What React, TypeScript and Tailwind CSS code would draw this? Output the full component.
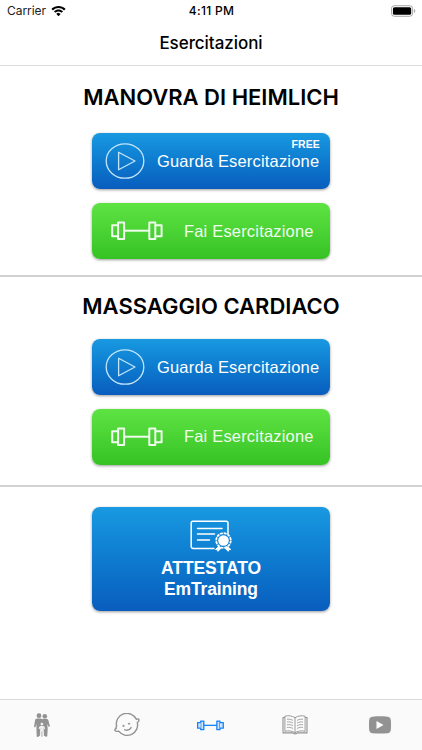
import React from 'react';

interface IconProps {
  className?: string;
}

interface SectionProps {
  title: string;
  titleClass: string;
  free?: boolean;
}

const WifiIcon: React.FC<IconProps> = ({ className }) => (
  <svg viewBox="0 0 16 12" fill="currentColor" className={className}>
    <path d="M8 0.6c2.8 0 5.3 1.1 7.2 2.8.2.2.2.5 0 .7l-1 1c-.2.2-.4.2-.6 0C12.100 3.700 10.100 2.900 8 2.900S3.900 3.700 2.400 5.100c-.2.2-.4.2-.6 0l-1-1c-.2-.2-.2-.5 0-.7C2.700 1.700 5.200.6 8 .6z" />
    <path d="M8 4.300c1.700 0 3.300.7 4.500 1.700.2.2.2.5 0 .7l-1 1c-.2.2-.4.2-.6 0C10.100 7 9.100 6.600 8 6.600s-2.100.4-2.900 1.100c-.2.2-.4.2-.6 0l-1-1c-.2-.2-.2-.5 0-.7C4.700 5 6.300 4.300 8 4.300z" />
    <path d="M8 8c.8 0 1.500.3 2 .8.200.2.200.4 0 .6l-1.700 1.800c-.2.2-.4.2-.6 0L6 9.400c-.2-.2-.2-.4 0-.6.5-.5 1.200-.8 2-.8z" />
  </svg>
);

const BatteryIcon: React.FC<IconProps> = ({ className }) => (
  <svg viewBox="0 0 26 12" className={className}>
    <rect x="0.500" y="0.500" width="22" height="11" rx="3" fill="#fff" stroke="#a3a3a3" />
    <rect x="2" y="2" width="19" height="8" rx="1.700" fill="#000" />
    <path d="M24 4c.8.3 1.200 1.100 1.200 2S24.800 7.700 24 8z" fill="#a3a3a3" />
  </svg>
);

const PlayIcon: React.FC<IconProps> = ({ className }) => (
  <svg viewBox="0 0 40 36" fill="none" stroke="currentColor" strokeWidth="1.300" className={className}>
    <ellipse cx="20" cy="18" rx="18.800" ry="17.200" />
    <path d="M13.600 9.200v17.600L30 18z" strokeLinejoin="round" />
  </svg>
);

const DumbbellIcon: React.FC<IconProps> = ({ className }) => (
  <svg viewBox="0 0 52 20" fill="none" stroke="currentColor" strokeLinejoin="round" className={className}>
    <rect x="7.100" y="1.500" width="6" height="16.500" />
    <path d="M7.100 4.300H1.200v10.900h5.900" />
    <path d="M13.100 9.700h25.200" />
    <rect x="38.300" y="1.500" width="6" height="16.500" />
    <path d="M44.300 4.300h6.300v10.900h-6.300" />
  </svg>
);

const CertificateIcon: React.FC<IconProps> = ({ className }) => (
  <svg viewBox="0 0 42 32" fill="none" stroke="currentColor" strokeLinejoin="round" className={className}>
    <path d="M24.500 28.400H3a1.800 1.800 0 0 1-1.800-1.800V3A1.800 1.800 0 0 1 3 1.200h33.200A1.800 1.800 0 0 1 38 3v11" strokeWidth="1.500" />
    <path d="M7.500 8.500H32M7.500 14h17M7.500 20h12" strokeWidth="1.500" strokeLinecap="round" />
    <path d="M29 26l-3.500 3.500 2 .2.500 1.600 3.500-3.500M37 26l3.800 3.500-2.100.2-.5 1.600-3.500-3.500" fill="currentColor" strokeWidth="1" />
    <circle cx="33.500" cy="20.500" r="7.300" fill="#1787d8" strokeWidth="1.700" strokeDasharray="3 .82" />
    <circle cx="33.500" cy="20.500" r="5.300" fill="currentColor" stroke="none" />
  </svg>
);

const FamilyIcon: React.FC<IconProps> = ({ className }) => (
  <svg viewBox="0 0 16 24" fill="currentColor" className={className}>
    <circle cx="5" cy="2.700" r="2.400" />
    <circle cx="10.800" cy="3.200" r="2.300" />
    <path d="M3 5.400h4l1.100.8 1.200-.5h2.900c1.200 0 2 .8 2.300 2l1.300 5c.3 1.100-1 1.500-1.500.6l-1-2.200.4 4.600-.4 7c-.1 1.400-2 1.400-2.200.2H4.900c-.1 1.400-2.100 1.400-2.200 0l-.3-7.500.1-4.500-.9 2.900c-.5 1-1.700.6-1.500-.5l.9-5.700c.3-1.400.9-2.200 2-2.200z" />
    <circle cx="7.900" cy="11.100" r="1.400" fill="#f1f1f1" />
    <path d="M6.300 13h3.200c.8 0 1.200.8 1.700 3l-.7.300-.8-1.300.4 8h-4.300l.4-8-.8 1.300-.7-.3c.4-2.200.8-3 1.600-3z" fill="#eee" />
    <path d="M7.900 18.500v5.500" stroke="currentColor" strokeWidth=".6" />
  </svg>
);

const BabyIcon: React.FC<IconProps> = ({ className }) => (
  <svg viewBox="0 0 26 24" fill="none" stroke="currentColor" strokeWidth="1.400" strokeLinecap="round" strokeLinejoin="round" className={className}>
    <path d="M2.600 13.200A10.500 10.500 0 0 1 22.300 6.300c1.500-.8 2.800-.4 2.700.9-.1 1.100-.7 1.800-1.700 2.200A10.500 10.500 0 0 1 4.700 18.200c-2.300.4-4-.2-3.900-1.300.1-.8.8-1.200 1.500-1.400-.4-.8-.3-1.700.3-2.300z" />
    <path d="M10.700 16.800c2.500.8 5.300-.2 6.400-2.200" />
    <circle cx="9.400" cy="12.900" r=".7" fill="currentColor" strokeWidth=".7" />
    <circle cx="15" cy="10.700" r=".7" fill="currentColor" strokeWidth=".7" />
  </svg>
);

const BookIcon: React.FC<IconProps> = ({ className }) => (
  <svg viewBox="0 0 26 20" fill="none" stroke="currentColor" strokeLinejoin="round" className={className}>
    <path d="M13 2.800C10.300.8 6.500.3 2.900 1.200v15.100c3.600-.9 7.400-.4 10.100 1.500 2.700-1.900 6.500-2.400 10.100-1.500V1.200C19.500.3 15.700.8 13 2.800v15" strokeWidth=".9" />
    <path d="M2.900 2.500H1v15.400h9.700c.3 1.300 4.300 1.300 4.600 0H25V2.500h-1.900" strokeWidth="1.100" />
    <path d="M5 4.300c2-.3 4.200 0 6 1.100M5 7c2-.3 4.200 0 6 1.100M5 9.700c2-.3 4.200 0 6 1.100M5 12.400c2-.3 4.200 0 6 1.100M21 4.300c-2-.3-4.200 0-6 1.100M21 7c-2-.3-4.200 0-6 1.100M21 9.700c-2-.3-4.200 0-6 1.100M21 12.400c-2-.3-4.200 0-6 1.100" strokeWidth=".8" />
  </svg>
);

const VideoIcon: React.FC<IconProps> = ({ className }) => (
  <svg viewBox="0 0 22 18" fill="currentColor" className={className}>
    <path d="M3.500.8C8.500.2 13.500.2 18.500.8 20.500 1 21.600 2 21.800 4c.3 3.300.3 6.700 0 10-.2 2-1.300 3-3.300 3.200-5 .5-10 .5-15 0C1.500 17 .4 16 .2 14-.1 10.700-.1 7.300.2 4 .4 2 1.500 1 3.500.8z" />
    <path d="M7.500 5v8l7-4z" fill="#fff" />
  </svg>
);

const Section: React.FC<SectionProps> = ({ title, titleClass, free }) => (
  <section className="flex flex-col items-center border-b-2 border-[#d2d2d3]">
    <h2 className={`font-['Inter'] text-[22px] leading-7 font-semibold whitespace-nowrap text-black ${titleClass}`}>{title}</h2>
    <button className="relative flex h-[56px] w-[238px] shrink-0 items-center rounded-lg bg-linear-to-b from-[#1999e1] to-[#0a5dbd] pl-[13px] text-white shadow-[0_1px_3px_rgba(0,0,0,0.4)]">
      <PlayIcon className="h-9 w-10 text-[#c3e5fa]" />
      <span className="ml-3 pt-px text-[16.500px] tracking-[0.18px] whitespace-nowrap">Guarda Esercitazione</span>
      {free && <span className="absolute top-[5px] right-[10px] text-[10.500px] leading-3 font-bold tracking-[0.15px]">FREE</span>}
    </button>
    <button className="mt-3.5 flex h-[56px] w-[238px] shrink-0 items-center rounded-lg bg-linear-to-b from-[#5ee343] to-[#35c323] pl-[19px] text-[#effced] shadow-[0_1px_3px_rgba(0,0,0,0.4)]">
      <DumbbellIcon className="h-5 w-[52px] stroke-2" />
      <span className="ml-[21px] text-[16.500px] tracking-[0.18px] whitespace-nowrap">Fai Esercitazione</span>
    </button>
  </section>
);

const App: React.FC = () => {
  return (
    <div className="flex h-[750px] w-[422px] flex-col overflow-hidden bg-white font-['Liberation_Sans',sans-serif]">
      <header className="h-[66px] shrink-0 border-b border-[#dedede] font-['Inter'] text-black">
        <div className="grid h-[22px] grid-cols-3 items-center pr-[6px] pl-[7px]">
          <div className="flex items-center gap-[5px]">
            <span className="text-[12px] tracking-[-0.050px] text-[#222]">Carrier</span>
            <WifiIcon className="h-3 w-[15px]" />
          </div>
          <span className="text-center text-[12px] font-medium tracking-[0.3px]">4:11 PM</span>
          <BatteryIcon className="h-3 w-[25px] justify-self-end" />
        </div>
        <h1 className="pt-[9px] text-center text-[17px] leading-6 font-medium tracking-[-0.050px]">Esercitazioni</h1>
      </header>

      <main className="flex-1">
        <div className="h-[211px] pt-[17px] [&>section]:h-[194px]">
          <Section title="MANOVRA DI HEIMLICH" titleClass="mb-[22px]" free />
        </div>
        <div className="pt-[15px] [&>section]:h-[195px]">
          <Section title="MASSAGGIO CARDIACO" titleClass="mb-[18.500px]" />
        </div>
        <button className="mx-auto mt-5 flex h-[104px] w-[238px] flex-col items-center rounded-lg bg-linear-to-b from-[#1999e1] to-[#0a5dbd] pt-[13px] text-white shadow-[0_1px_3px_rgba(0,0,0,0.4)]">
          <CertificateIcon className="h-8 w-[42px]" />
          <span className="mt-[6px] text-[17.500px] leading-[21px] font-bold tracking-[-0.100px]">ATTESTATO</span>
          <span className="text-[17.500px] leading-[21px] font-bold tracking-[-0.150px]">EmTraining</span>
        </button>
      </main>

      <nav className="grid h-[51px] shrink-0 grid-cols-5 items-center justify-items-center border-t border-[#d9d9d9] bg-[#fafafa] text-[#929292]">
        <FamilyIcon className="h-6 w-4" />
        <BabyIcon className="h-6 w-[26px]" />
        <DumbbellIcon className="h-[11px] w-[27px] fill-[#cfe5fd] stroke-[2.500px] text-[#1683f5]" />
        <BookIcon className="h-5 w-[26px]" />
        <VideoIcon className="h-[18px] w-[22px]" />
      </nav>
    </div>
  );
};

export default App;
